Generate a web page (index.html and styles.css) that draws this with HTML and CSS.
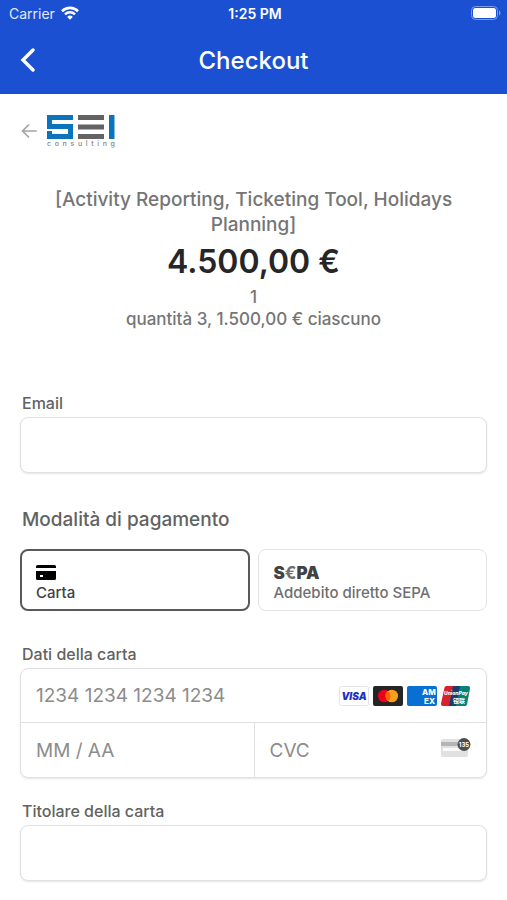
FILE: index.html
```html
<!DOCTYPE html>
<html lang="it">
<head>
<meta charset="utf-8">
<meta name="viewport" content="width=device-width, initial-scale=1">
<title>Checkout</title>
<link rel="stylesheet" href="styles.css">
</head>
<body>
<header class="topbar">
  <div class="status">
    <div class="status-left">
      <span>Carrier</span>
      <svg width="18" height="14" viewBox="0 0 18 14" fill="none" stroke="#fff" stroke-width="2.6" aria-hidden="true">
        <path d="M1 5.2a11.4 11.4 0 0 1 16 0"/>
        <path d="M4 8.3a7.1 7.1 0 0 1 10 0"/>
        <path d="M9 13.8 6.2 10.9a4 4 0 0 1 5.6 0z" fill="#fff" stroke="none"/>
      </svg>
    </div>
    <span class="status-time">1:25 PM</span>
    <svg class="battery" width="30" height="14" viewBox="0 0 30 14" aria-hidden="true">
      <rect x="0.5" y="0.5" width="26" height="13" rx="4" fill="none" stroke="#7f9be6"/>
      <rect x="2" y="2" width="23" height="10" rx="2.5" fill="#fff"/>
      <path d="M28 4.5c2 .6 2 4.4 0 5z" fill="#7f9be6"/>
    </svg>
  </div>
  <nav class="nav">
    <button class="nav-back" type="button" aria-label="Indietro">
      <svg width="16" height="24" viewBox="0 0 16 24" fill="none" stroke="#fff" stroke-width="3.4" stroke-linecap="round" stroke-linejoin="miter"><path d="M13 2 3 12l10 10"/></svg>
    </button>
    <h1 class="nav-title">Checkout</h1>
  </nav>
</header>

<main class="page">
  <a class="brand" href="#" aria-label="SEI consulting">
    <svg width="16" height="14" viewBox="0 0 16 14" fill="none" stroke="#a3a3a3" stroke-width="1.7" stroke-linecap="round" stroke-linejoin="round"><path d="M15 7H1.500M7.500 1 1.500 7l6 6"/></svg>
    <span class="logo">
      <svg width="68" height="26" viewBox="0 0 68 26">
        <path d="M0 1h26v5H5v4h21v15H0v-8h5v3h16v-5H0z" fill="#0b74bb"/>
        <path d="M31 1h26v5H31zM31 10.500h26v5H31zM31 20h26v5H31z" fill="#636363"/>
        <path d="M62 1h5.500v24H62z" fill="#0b74bb"/>
      </svg>
      <span class="logo-sub"><i>c</i><i>o</i><i>n</i><i>s</i><i>u</i><i>l</i><i>t</i><i>i</i><i>n</i><i>g</i></span>
    </span>
  </a>

  <section class="summary">
    <h2 class="summary-name">[Activity Reporting, Ticketing Tool, Holidays Planning]</h2>
    <p class="summary-price">4.500,00 €</p>
    <p class="summary-note">1</p>
    <p class="summary-note">quantità 3, 1.500,00 € ciascuno</p>
  </section>

  <form class="form">
    <label class="label" for="email">Email</label>
    <input class="field" id="email" type="email">

    <fieldset class="methods">
      <legend class="methods-title">Modalità di pagamento</legend>
      <div class="methods-grid">
        <label class="method method-active">
          <input class="method-radio" type="radio" name="method" checked>
          <svg class="method-icon" width="20" height="16" viewBox="0 0 20 16" aria-hidden="true">
            <path d="M1.500 0h17A1.500 1.500 0 0 1 20 1.500V3H0V1.500A1.500 1.500 0 0 1 1.500 0z"/>
            <path fill-rule="evenodd" d="M0 6h20v7.500a1.500 1.500 0 0 1-1.500 1.500h-17A1.500 1.500 0 0 1 0 13.500zM4 10v2h3v-2z"/>
          </svg>
          <span>Carta</span>
        </label>
        <label class="method">
          <input class="method-radio" type="radio" name="method">
          <span class="sepa">S<span class="sepa-euro">€</span>PA</span>
          <span>Addebito diretto SEPA</span>
        </label>
      </div>
    </fieldset>

    <label class="label" for="number">Dati della carta</label>
    <div class="card">
      <div class="cell cell-wide">
        <input class="cell-input" id="number" type="text" inputmode="numeric" placeholder="1234 1234 1234 1234">
        <div class="brands">
          <svg width="30" height="20" viewBox="0 0 30 20" role="img" aria-label="Visa">
            <rect x=".5" y=".5" width="29" height="19" rx="2" fill="#fff" stroke="#e3e3e8"/>
            <text class="visa" x="15" y="14" text-anchor="middle">VISA</text>
          </svg>
          <svg width="30" height="20" viewBox="0 0 30 20" role="img" aria-label="Mastercard">
            <rect width="30" height="20" rx="2" fill="#252525"/>
            <circle cx="11.200" cy="10" r="6.300" fill="#eb001b"/>
            <circle cx="18.800" cy="10" r="6.300" fill="#f79e1b"/>
            <path d="M15 5a6.300 6.300 0 0 1 0 10 6.300 6.300 0 0 1 0-10z" fill="#ff5f00"/>
          </svg>
          <svg width="30" height="20" viewBox="0 0 30 20" role="img" aria-label="American Express">
            <rect width="30" height="20" rx="2" fill="#0870d2"/>
            <text class="amex" x="15" y="9">AM</text>
            <text class="amex" x="17" y="18">EX</text>
          </svg>
          <svg width="30" height="20" viewBox="0 0 30 20" role="img" aria-label="UnionPay">
            <path d="M5.500 0H13L9 20H2a2 2 0 0 1-2-2.500L3.500 1.500A2 2 0 0 1 5.500 0z" fill="#d8222e"/>
            <path d="M12 0h8l-4 20H8z" fill="#13406e"/>
            <path d="M19 0h8a2 2 0 0 1 2 2.500L26 18.500a2 2 0 0 1-2 1.500h-9z" fill="#087f79"/>
            <text class="union" x="15" y="9" text-anchor="middle">UnionPay</text>
            <text class="union-cjk" x="12" y="17">银联</text>
          </svg>
        </div>
      </div>
      <div class="cell">
        <input class="cell-input" type="text" placeholder="MM / AA" aria-label="Scadenza">
      </div>
      <div class="cell cell-cvc">
        <input class="cell-input" type="text" placeholder="CVC" aria-label="CVC">
        <svg width="30" height="24" viewBox="0 0 30 24" aria-hidden="true">
          <rect y="1" width="27" height="18" rx="2" fill="#e1e1e1"/>
          <rect y="4" width="27" height="4" fill="#b5b5b5"/>
          <rect x="2" y="10" width="23" height="3" fill="#fafafa"/>
          <circle cx="23" cy="6.500" r="6.500" fill="#4d4d4d"/>
          <text class="cvc-text" x="23" y="9" text-anchor="middle">135</text>
        </svg>
      </div>
    </div>

    <label class="label" for="holder">Titolare della carta</label>
    <input class="field" id="holder" type="text">
  </form>
</main>
</body>
</html>
```
FILE: styles.css
```css
* {
  box-sizing: border-box;
}

body {
  margin: 0;
  background: #fff;
  color: #626262;
  font-family: Inter, "Liberation Sans", sans-serif;
}

h1, h2, p {
  margin: 0;
}

.topbar {
  background: #1a50d1;
  color: #fff;
}

.status {
  display: grid;
  grid-template-columns: 1fr auto 1fr;
  align-items: center;
  height: 26px;
  padding: 0 6px 0 9px;
  font-size: 14px;
}

.status-left {
  display: flex;
  align-items: center;
  gap: 6px;
  color: #e3eaff;
}

.status-time {
  font-weight: 600;
}

.battery {
  justify-self: end;
}

.nav {
  display: grid;
  grid-template-columns: 40px 1fr 40px;
  align-items: center;
  height: 68px;
  padding: 0 12px;
}

.nav-back {
  display: flex;
  padding: 8px;
  border: 0;
  background: none;
}

.nav-title {
  font-size: 24px;
  font-weight: 500;
  text-align: center;
}

.page {
  padding: 20px 20px;
}

.brand {
  display: flex;
  align-items: center;
  gap: 10px;
  height: 34px;
  padding-left: 1px;
  text-decoration: none;
}

.logo {
  display: flex;
  flex-direction: column;
  width: 68px;
}

.logo-sub {
  display: flex;
  justify-content: space-between;
  color: #858585;
  font-size: 7px;
  font-weight: 500;
  line-height: 8px;
}

.logo-sub i {
  font-style: normal;
}

.summary {
  margin-top: 39px;
  color: #757575;
  text-align: center;
}

.summary-name {
  padding: 0 24px;
  font-size: 19px;
  font-weight: 500;
  line-height: 25px;
}

.summary-price {
  color: #262626;
  font-size: 32px;
  font-weight: 600;
  line-height: 49px;
}

.summary-note {
  font-size: 17px;
  font-weight: 500;
  line-height: 22px;
}

.form {
  margin-top: 62px;
}

.label {
  display: block;
  padding: 0 2px;
  margin-bottom: 3px;
  font-size: 16px;
  font-weight: 500;
  line-height: 22px;
}

.field {
  display: block;
  width: 100%;
  height: 56px;
  padding: 0 16px;
  border: 1px solid #e0e0e0;
  border-radius: 8px;
  box-shadow: 0 1px 2px #0000001a;
  font: 400 19px Inter, sans-serif;
}

.methods {
  min-width: 0;
  margin: 33px 0 32px;
  padding: 0;
  border: 0;
}

.methods-title {
  padding: 0 2px;
  margin-bottom: 15px;
  font-size: 19px;
  font-weight: 500;
  line-height: 28px;
}

.methods-grid {
  display: grid;
  grid-template-columns: 1fr 1fr;
  gap: 8px;
}

.method {
  position: relative;
  display: flex;
  flex-direction: column;
  gap: 2px;
  height: 62px;
  padding: 15px 15px 0;
  border: 1px solid #e4e4e4;
  border-radius: 8px;
  color: #6f6f6f;
  font-size: 15px;
  font-weight: 500;
  line-height: 20px;
}

.method-active {
  border: 2px solid #595959;
  padding: 14px 14px 0;
  color: #404040;
}

.method-icon {
  flex: none;
  fill: #000;
}

.method-radio {
  position: absolute;
  inset: 0;
  width: 100%;
  height: 100%;
  margin: 0;
  opacity: 0;
}

.sepa {
  color: #424242;
  font-size: 17px;
  font-weight: 900;
  line-height: 16px;
}

.sepa-euro {
  color: #707070;
  font-weight: 700;
}

.card {
  display: grid;
  grid-template-columns: 1fr 1fr;
  margin-bottom: 22px;
  border: 1px solid #e0e0e0;
  border-radius: 8px;
  box-shadow: 0 1px 2px #0000001a;
}

.cell {
  display: flex;
  align-items: center;
  min-width: 0;
  height: 54px;
  padding: 0 15px;
}

.cell-wide {
  grid-column: 1 / -1;
  border-bottom: 1px solid #e0e0e0;
}

.cell-cvc {
  border-left: 1px solid #e0e0e0;
}

.cell-input {
  flex: 1;
  min-width: 0;
  padding: 0;
  border: 0;
  background: none;
  font: 400 19px Inter, sans-serif;
}

.cell-input::placeholder {
  color: #8c8c8c;
  opacity: 1;
}

.brands {
  display: flex;
  gap: 4px;
}

.visa {
  fill: #2230c4;
  font-size: 10px;
  font-style: italic;
  font-weight: 900;
}

.amex {
  fill: #fff;
  font-size: 8px;
  font-weight: 800;
}

.union {
  fill: #fff;
  font-size: 5px;
  font-style: italic;
  font-weight: 800;
}

.union-cjk {
  fill: #fff;
  font-family: "Noto Sans CJK SC", sans-serif;
  font-size: 6px;
  font-weight: 700;
}

.cvc-text {
  fill: #fff;
  font-size: 6px;
  font-weight: 700;
}
```
